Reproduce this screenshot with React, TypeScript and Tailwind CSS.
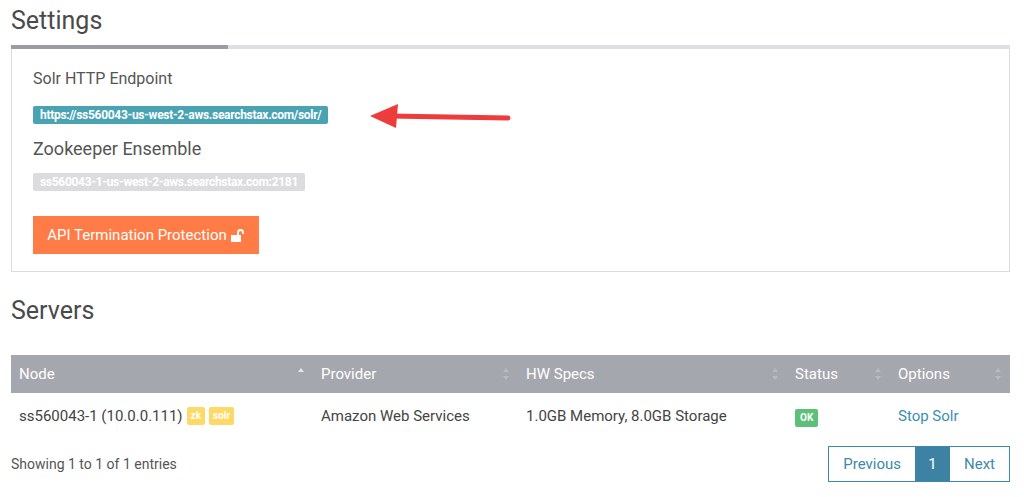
import React from "react";

function Sort({ up }: { up?: boolean }) {
  return (
    <svg width="8" height="14" viewBox="0 0 8 14" className="shrink-0">
      <path d="M4 1 L7 5 H1 Z" fill={up ? "#e5e7eb" : "#b8bac0"} />
      {!up && <path d="M4 13 L7 9 H1 Z" fill="#b8bac0" />}
    </svg>
  );
}

export default function App() {
  const th = "flex items-center justify-between px-2 h-full";
  return (
    <div className="w-[1024px] h-[497px] bg-white overflow-hidden" style={{ fontFamily: "Roboto, 'Liberation Sans', sans-serif" }}>
      <div className="px-[11px] pr-[14px]">
        <h1 className="text-[25px] text-[#4a4a4a] pt-[2px] h-[45px] leading-[38px]">Settings</h1>
        <div className="flex h-[4px]">
          <div className="w-[217px] bg-[#9a9ca3]" />
          <div className="flex-1 bg-[#dfe0e4]" />
        </div>
        <div className="border border-t-0 border-[#dcdcdc] h-[223px] px-[21px] pt-[20px] relative">
          <div className="text-[16px] text-[#555] leading-[20px]">Solr HTTP Endpoint</div>
          <div className="mt-[17px] inline-block bg-[#4aa3b3] text-white text-[12px] font-bold leading-[18px] px-[7px] rounded-[2px] tracking-[-0.3px]">https://ss560043-us-west-2-aws.searchstax.com/solr/</div>
          <svg className="absolute left-[356px] top-[53px]" width="145" height="30" viewBox="0 0 145 30">
            <line x1="22" y1="14" x2="140" y2="16" stroke="#ee3b3b" strokeWidth="5" strokeLinecap="round" />
            <path d="M2 14 L30 2 L28 26 Z" fill="#ee3b3b" />
          </svg>
          <div className="mt-[12px] text-[18px] text-[#555] leading-[22px]">Zookeeper Ensemble</div>
          <div className="mt-[13px] inline-block bg-[#dcdcdf] text-white text-[12px] font-bold leading-[18px] px-[7px] rounded-[2px] tracking-[-0.3px]">ss560043-1-us-west-2-aws.searchstax.com:2181</div>
          <div>
            <button className="mt-[23px] h-[38px] w-[226px] bg-[#ff7c47] text-white text-[15px] flex items-center justify-center gap-[4px]">
              API Termination Protection
              <svg width="14" height="13" viewBox="0 0 14 13"><rect x="0" y="6" width="10" height="7" fill="white" /><path d="M7 6 V3.5 a2.5 2.5 0 0 1 5 0 V5" stroke="white" strokeWidth="1.8" fill="none" /></svg>
            </button>
          </div>
        </div>
        <h2 className="text-[25px] text-[#4a4a4a] mt-[24px] leading-[30px]">Servers</h2>
        <div className="mt-[29px] grid grid-cols-[302px_205px_269px_103px_1fr] h-[40px] bg-[#a5a7ae] text-white text-[15px] border-b-[2px] border-white">
          <div className={th}>Node<Sort up /></div>
          <div className={th}>Provider<Sort /></div>
          <div className={th}>HW Specs<Sort /></div>
          <div className={th}>Status<Sort /></div>
          <div className={th}>Options<Sort /></div>
        </div>
        <div className="grid grid-cols-[302px_205px_269px_103px_1fr] h-[42px] items-center text-[15px] text-[#444]">
          <div className="px-2 flex items-center gap-[4px]">ss560043-1 (10.0.0.111)
            <span className="bg-[#ffd966] text-white text-[10px] font-bold px-[4px] leading-[18px] rounded-[2px]">zk</span>
            <span className="bg-[#ffd966] text-white text-[10px] font-bold px-[4px] leading-[18px] rounded-[2px]">solr</span>
          </div>
          <div className="px-2">Amazon Web Services</div>
          <div className="px-2">1.0GB Memory, 8.0GB Storage</div>
          <div className="px-2"><span className="bg-[#5cc07a] text-white text-[10px] font-bold px-[5px] leading-[18px] rounded-[2px] inline-block">OK</span></div>
          <div className="px-2 text-[#3a8fb0]">Stop Solr</div>
        </div>
        <div className="flex items-center justify-between mt-[9px]">
          <div className="text-[14px] text-[#555]">Showing 1 to 1 of 1 entries</div>
          <div className="flex h-[36px] border border-[#3d8aa8] text-[15px]">
            <div className="px-[14px] flex items-center text-[#3d8aa8]">Previous</div>
            <div className="w-[35px] flex items-center justify-center bg-[#3d82a3] text-white">1</div>
            <div className="px-[14px] flex items-center text-[#3d8aa8]">Next</div>
          </div>
        </div>
      </div>
    </div>
  );
}
